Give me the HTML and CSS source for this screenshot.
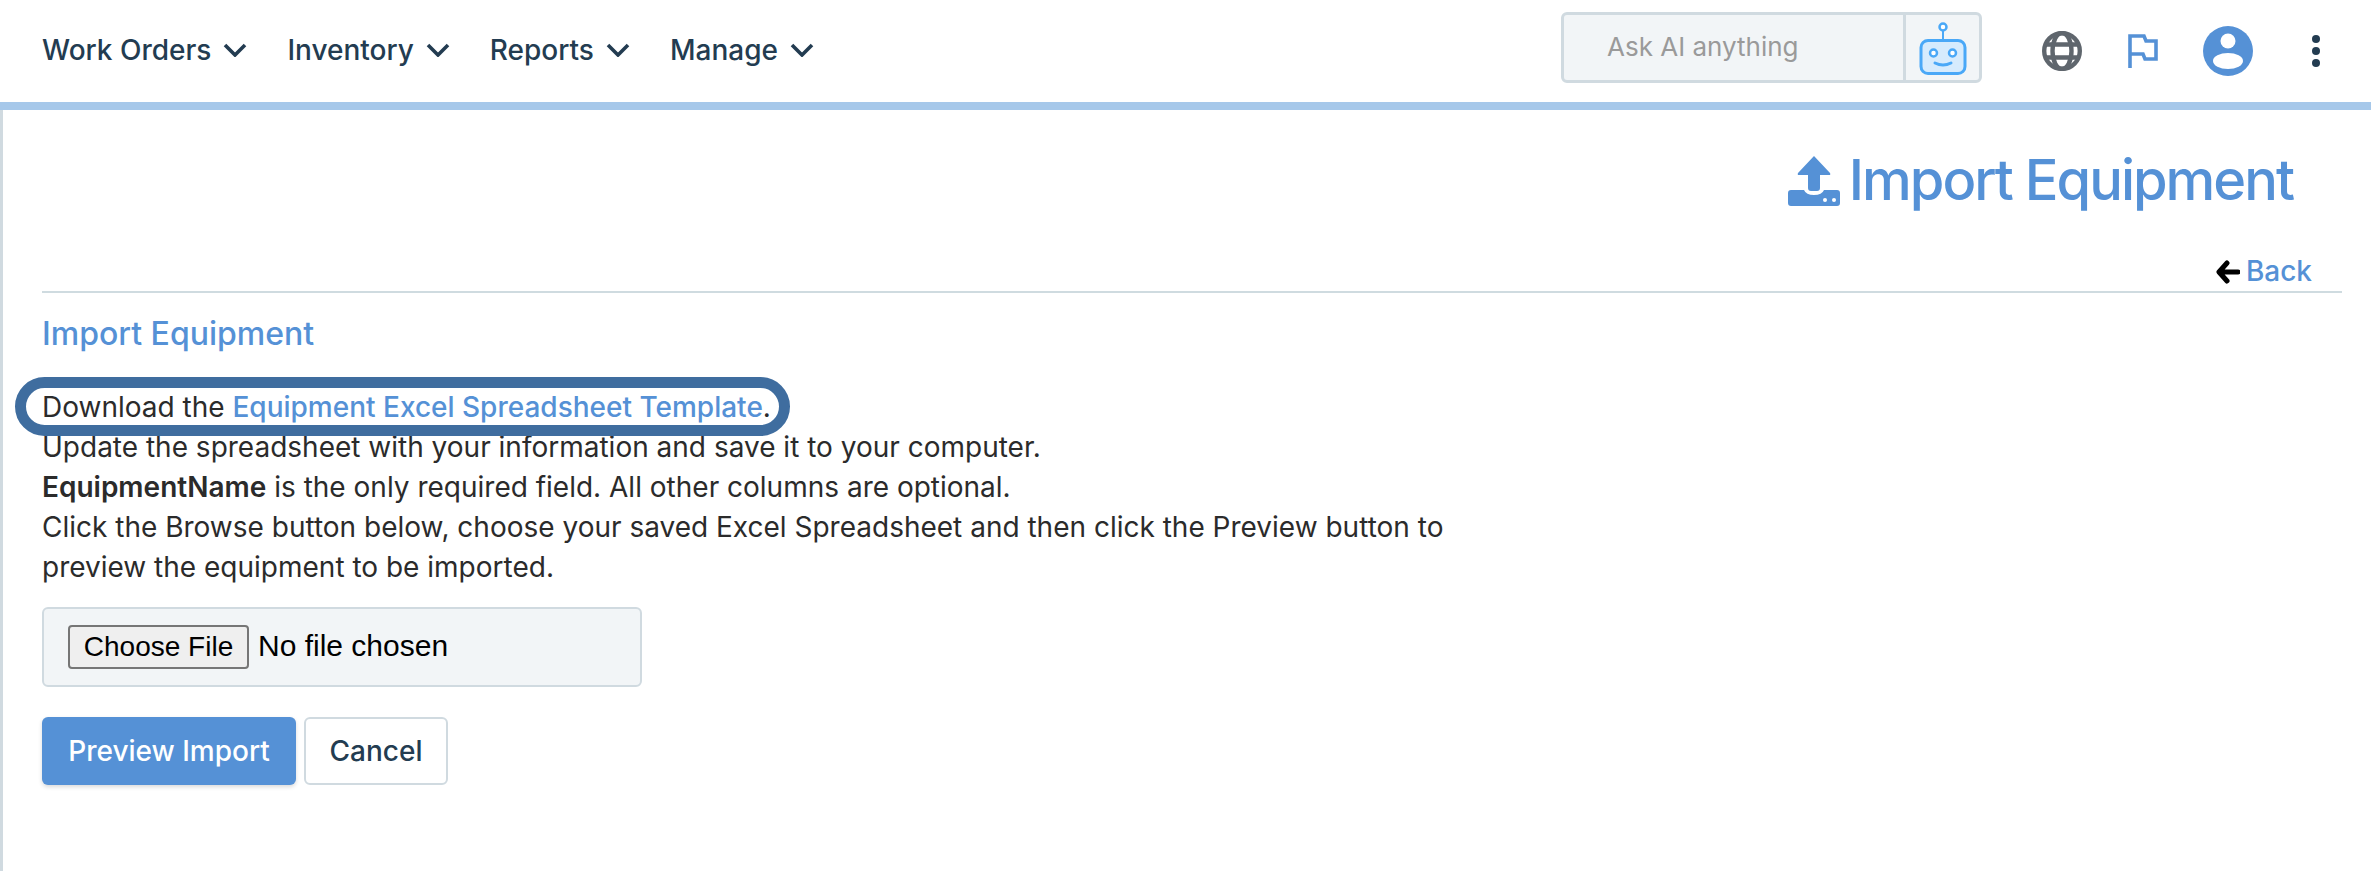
FILE: index.html
```html
<!DOCTYPE html>
<html lang="en">
<head>
    <meta charset="UTF-8">
    <title>Import Equipment</title>
    <link rel="stylesheet" href="styles.css">
</head>
<body>
    <header class="topbar">
        <nav class="main-nav">
            <a class="nav-item" href="#">Work Orders <svg class="chevron" viewBox="0 0 24 14"><path d="M2 2l10 10L22 2"/></svg></a>
            <a class="nav-item" href="#">Inventory <svg class="chevron" viewBox="0 0 24 14"><path d="M2 2l10 10L22 2"/></svg></a>
            <a class="nav-item" href="#">Reports <svg class="chevron" viewBox="0 0 24 14"><path d="M2 2l10 10L22 2"/></svg></a>
            <a class="nav-item" href="#">Manage <svg class="chevron" viewBox="0 0 24 14"><path d="M2 2l10 10L22 2"/></svg></a>
        </nav>
        <div class="tools">
            <div class="ask-box">
                <input class="ask-input" type="text" placeholder="Ask AI anything">
                <span class="ask-btn">
                    <svg class="robot" viewBox="0 0 48 56">
                        <circle cx="24" cy="6" r="3.5" fill="#fff" stroke="#4aa8f7" stroke-width="2.5"/>
                        <path d="M24 10v9" stroke="#4aa8f7" stroke-width="2" fill="none"/>
                        <rect x="2" y="19.5" width="44" height="33" rx="7" fill="#d6ebfd" stroke="#4aa8f7" stroke-width="3"/>
                        <circle cx="14.5" cy="32" r="3.5" fill="#fff" stroke="#4aa8f7" stroke-width="2.5"/>
                        <circle cx="33.5" cy="32" r="3.5" fill="#fff" stroke="#4aa8f7" stroke-width="2.5"/>
                        <path d="M16 42q8 4 16 0" stroke="#4aa8f7" stroke-width="3" fill="none" stroke-linecap="round"/>
                    </svg>
                </span>
            </div>
            <svg class="icon-globe" viewBox="0 0 40 40" fill="none" stroke="#5f666d" stroke-width="4.4">
                <circle cx="20" cy="20" r="17.8"/>
                <ellipse cx="20" cy="20" rx="9.5" ry="18"/>
                <path d="M3 13.5h34M3 26.5h34"/>
            </svg>
            <svg class="icon-flag" viewBox="0 0 30 34" fill="none" stroke="#5591d6" stroke-width="3.6">
                <path d="M2 34V2h14l2 5h10v18H17l-2-5H2"/>
            </svg>
            <svg class="icon-user" viewBox="0 0 50 50">
                <circle cx="25" cy="25" r="25" fill="#5591d6"/>
                <circle cx="25" cy="15" r="7.5" fill="#fff"/>
                <ellipse cx="25" cy="35" rx="15" ry="8" fill="#fff"/>
            </svg>
            <span class="dots"><i></i><i></i><i></i></span>
        </div>
    </header>

    <main class="content">
        <h1 class="page-title">
            <svg class="icon-upload" viewBox="0 0 52 51">
                <path d="M26 1L10 18q-1 2 1 2h9v13q0 3 3 3h6q3 0 3-3V20h9q2 0 1-2z" fill="#5591d6"/>
                <path d="M3 35h13q2 5 10 5t10-5h13q3 0 3 3v10q0 3-3 3H3q-3 0-3-3V38q0-3 3-3z" fill="#5591d6"/>
                <circle cx="37" cy="45" r="2" fill="#fff"/>
                <circle cx="46" cy="45" r="2" fill="#fff"/>
            </svg>
            Import Equipment
        </h1>
        <div class="back-row">
            <a class="back-link" href="#"><svg class="icon-back" viewBox="0 0 24 24" fill="none" stroke="#000" stroke-width="5" stroke-linecap="round" stroke-linejoin="round"><path d="M11 3L3 12l8 9M4 12h18"/></svg>Back</a>
        </div>
        <h2 class="section-title">Import Equipment</h2>
        <div class="steps">
            <span class="highlight"></span>
            Download the <a class="template-link" href="#">Equipment Excel Spreadsheet Template</a>.<br>
            Update the spreadsheet with your information and save it to your computer.<br>
            <b>EquipmentName</b> is the only required field. All other columns are optional.<br>
            Click the Browse button below, choose your saved Excel Spreadsheet and then click the Preview button to<br>
            preview the equipment to be imported.
        </div>
        <div class="file-box"><input class="file-input" type="file"></div>
        <div class="actions">
            <button class="btn btn-primary" type="button">Preview Import</button>
            <button class="btn btn-light" type="button">Cancel</button>
        </div>
    </main>
</body>
</html>
```
FILE: styles.css
```css
body {
    margin: 0;
    background: #fff;
    font-family: Inter, "Liberation Sans", sans-serif;
    font-size: 28px;
    color: #2b2b2b;
}
a {
    color: #5591d6;
    text-decoration: none;
}
.topbar {
    display: flex;
    justify-content: space-between;
    align-items: center;
    height: 102px;
    border-bottom: 8px solid #a6c8ea;
    padding: 0 43px 0 42px;
}
.main-nav {
    display: flex;
    gap: 40px;
    margin-top: -2px;
}
.nav-item {
    display: flex;
    align-items: center;
    gap: 12px;
    color: #233c51;
    font-size: 28px;
    font-weight: 500;
}
.chevron {
    width: 24px;
    height: 14px;
    fill: none;
    stroke: #233c51;
    stroke-width: 3.6;
}
.tools {
    display: flex;
    align-items: center;
    margin-right: 8px;
}
.ask-box {
    display: flex;
    box-sizing: border-box;
    width: 421px;
    height: 71px;
    margin-top: -7px;
    margin-right: 60px;
    border: 3px solid #d0dae0;
    border-radius: 6px;
    background: #f2f5f7;
}
.ask-input {
    flex: 1;
    min-width: 0;
    border: none;
    background: transparent;
    padding: 0 0 2px 43px;
    font-family: inherit;
    font-size: 26px;
}
.ask-input::placeholder {
    color: #9a9a9a;
}
.ask-btn {
    display: flex;
    align-items: flex-start;
    justify-content: center;
    width: 73px;
    border-left: 3px solid #d0dae0;
    padding-top: 6px;
}
.robot {
    width: 48px;
    height: 56px;
}
.icon-globe {
    width: 40px;
    height: 40px;
    margin-right: 46px;
}
.icon-flag {
    width: 30px;
    height: 34px;
    margin-right: 45px;
}
.icon-user {
    width: 50px;
    height: 50px;
    margin-right: 59px;
}
.dots {
    display: flex;
    flex-direction: column;
    gap: 4px;
}
.dots i {
    width: 8px;
    height: 8px;
    border-radius: 50%;
    background: #233c51;
}
.content {
    box-sizing: border-box;
    min-height: 761px;
    border-left: 3px solid #d0dae0;
    padding: 36px 29px 0 39px;
}
.page-title {
    display: flex;
    justify-content: flex-end;
    align-items: center;
    gap: 9px;
    margin: 0 49px 0 0;
    color: #5591d6;
    font-size: 56px;
    font-weight: 500;
    letter-spacing: -2px;
    line-height: 68px;
}
.icon-upload {
    width: 52px;
    height: 51px;
}
.back-row {
    display: flex;
    justify-content: flex-end;
    height: 37px;
    margin-top: 40px;
    padding-right: 30px;
    border-bottom: 2px solid #cfdbe0;
}
.back-link {
    display: flex;
    align-items: flex-start;
    gap: 6px;
    height: 34px;
    font-size: 28px;
    line-height: 34px;
    font-weight: 500;
}
.icon-back {
    width: 24px;
    height: 24px;
    margin-top: 6px;
}
.section-title {
    margin: 21px 0 0;
    color: #5591d6;
    font-size: 32px;
    font-weight: 500;
    line-height: 40px;
}
.steps {
    position: relative;
    margin-top: 33px;
    line-height: 40px;
}
.steps b {
    font-weight: 600;
}
.template-link {
    font-weight: 500;
}
.highlight {
    position: absolute;
    left: -27px;
    top: -10px;
    width: 753px;
    height: 37px;
    border: 11px solid #3f6d9f;
    border-radius: 30px;
}
.file-box {
    box-sizing: border-box;
    display: flex;
    align-items: center;
    width: 600px;
    height: 80px;
    margin-top: 20px;
    padding: 0 24px;
    border: 2px solid #d0dae0;
    border-radius: 6px;
    background: #f2f5f7;
}
.file-input {
    font-family: "Liberation Sans", sans-serif;
    font-size: 30px;
    color: #000;
}
.file-input::file-selector-button {
    box-sizing: border-box;
    width: 181px;
    height: 44px;
    margin-right: 9px;
    border: 2px solid #767676;
    border-radius: 4px;
    background: #efefef;
    font-size: 28px;
}
.actions {
    display: flex;
    gap: 8px;
    margin-top: 30px;
}
.btn {
    height: 68px;
    border-radius: 6px;
    font-family: inherit;
    font-size: 28px;
    font-weight: 500;
    cursor: pointer;
}
.btn-primary {
    width: 254px;
    border: none;
    background: #5591d6;
    color: #fff;
    box-shadow: 0 2px 4px rgba(0, 0, 0, 0.15);
}
.btn-light {
    width: 144px;
    border: 2px solid #d0dae0;
    background: #fff;
    color: #233c51;
}
```
